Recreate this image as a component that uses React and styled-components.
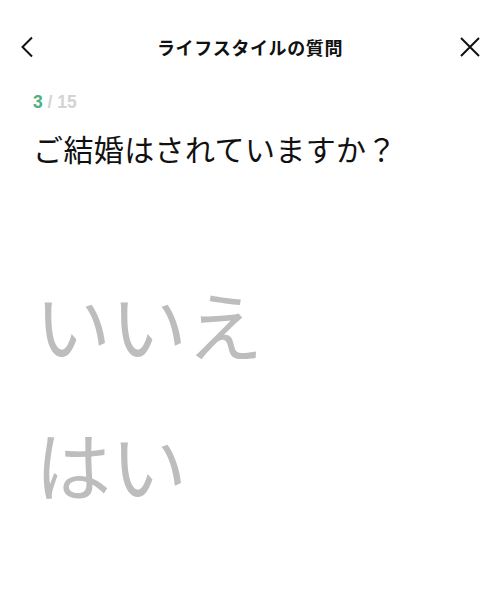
import styled, { createGlobalStyle } from 'styled-components';

const GlobalStyle = createGlobalStyle`
  html, body {
    margin: 0;
    padding: 0;
    background: #fff;
  }
  body {
    font-family: "Noto Sans CJK JP", "Noto Sans", sans-serif;
    color: #111;
  }
`;

const Page = styled.main`
  width: 500px;
  min-height: 594px;
  display: flex;
  flex-direction: column;
`;

const Header = styled.header`
  display: grid;
  grid-template-columns: 60px 1fr 60px;
  align-items: center;
  height: 54px;
  padding-top: 20px;
`;

const IconButton = styled.button`
  display: flex;
  align-items: center;
  justify-content: ${props => props.right ? 'flex-end' : 'flex-start'};
  padding: ${props => props.right ? '0 20px 0 0' : '0 0 0 20px'};
  background: none;
  border: none;
  height: 40px;
  cursor: pointer;
`;

const Title = styled.h1`
  margin: 0;
  text-align: center;
  font-size: 18px;
  font-weight: 700;
  letter-spacing: 0.6px;
`;

const Body = styled.section`
  padding: 0 33px;
  display: flex;
  flex-direction: column;
`;

const Progress = styled.div`
  margin-top: 18px;
  font-family: "Liberation Sans", Arial, sans-serif;
  font-size: 17.5px;
  font-weight: 700;
  line-height: 20px;
  color: #d3d3d3;

  b {
    color: #4caf7d;
  }
`;

const Question = styled.h2`
  margin: 14px 0 0;
  font-size: 30px;
  font-weight: 400;
  line-height: 44px;
  letter-spacing: 0.4px;
`;

const Options = styled.ul`
  list-style: none;
  margin: 103px 0 0;
  padding: 0 0 0 2px;
  display: flex;
  flex-direction: column;
  gap: 40px;
`;

const Option = styled.li`
  font-size: 76px;
  line-height: 100px;
  color: #bdbdbd;
  cursor: pointer;
`;

export default function App() {
  return (
    <>
      <GlobalStyle />
      <Page>
        <Header>
          <IconButton aria-label="戻る">
            <svg width="14" height="22" viewBox="0 0 14 22" fill="none">
              <path d="M12 1.5 L2.5 11 L12 20.5" stroke="#111" strokeWidth="2" />
            </svg>
          </IconButton>
          <Title>ライフスタイルの質問</Title>
          <IconButton right aria-label="閉じる">
            <svg width="20" height="20" viewBox="0 0 20 20" fill="none">
              <path d="M1 1 L19 19 M19 1 L1 19" stroke="#111" strokeWidth="2" />
            </svg>
          </IconButton>
        </Header>
        <Body>
          <Progress><b>3</b> / 15</Progress>
          <Question>ご結婚はされていますか？</Question>
          <Options>
            <Option>いいえ</Option>
            <Option>はい</Option>
          </Options>
        </Body>
      </Page>
    </>
  );
}
